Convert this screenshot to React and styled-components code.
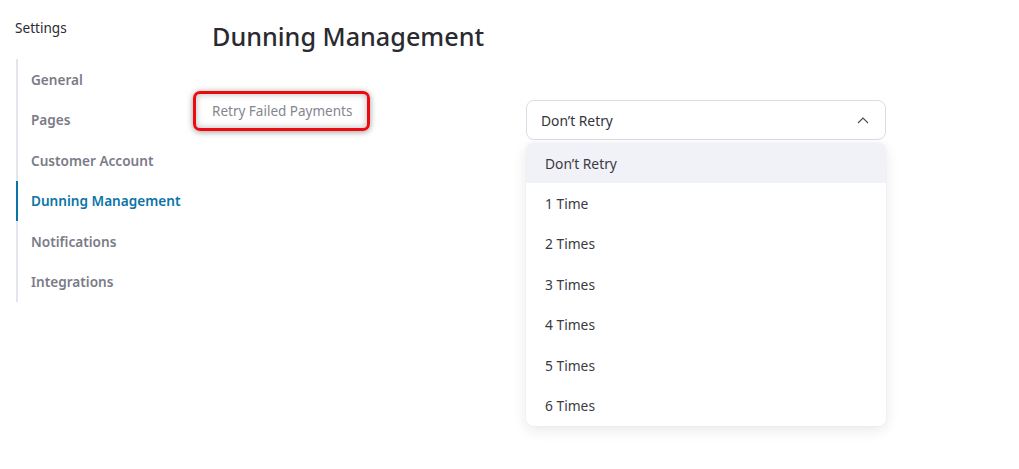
import React from 'react';
import styled, { createGlobalStyle } from "styled-components";

const GlobalStyle = createGlobalStyle`
  body {
    margin: 0;
    background: #ffffff;
    font-family: "Noto Sans", "Open Sans", sans-serif;
  }
`;

const Page = styled.div`
  display: flex;
  width: 1019px;
  height: 469px;
  background: #fff;
`;

const Sidebar = styled.aside`
  width: 196px;
  padding: 18px 0 0 15px;
  box-sizing: border-box;
`;

const SidebarTitle = styled.div`
  font-size: 13.6px;
  color: #2b2b33;
  line-height: 20px;
  margin-bottom: 21px;
`;

const Nav = styled.nav`
  display: flex;
  flex-direction: column;
  border-left: 2px solid #e4e4ee;
  margin-left: 1px;
`;

const NavItem = styled.a`
  display: flex;
  align-items: center;
  height: 40.5px;
  padding-left: 13px;
  margin-left: -2px;
  border-left: 2px solid ${p => (p.$active ? "#0a74a6" : "transparent")};
  color: ${p => (p.$active ? "#0a74a6" : "#7b7b87")};
  font-size: 13.6px;
  font-weight: 600;
  white-space: nowrap;
`;

const Main = styled.main`
  flex: 1;
  padding: 16px 0 0 16px;
`;

const Title = styled.h1`
  margin: 0;
  font-size: 25.2px;
  font-weight: 500;
  color: #2a2a30;
  line-height: 40px;
`;

const Row = styled.div`
  display: flex;
  align-items: flex-start;
  margin-top: 44px;
`;

const LabelCell = styled.div`
  width: 333px;
  margin-left: -19px;
  margin-top: -9px;
`;

const Highlight = styled.div`
  display: inline-flex;
  align-items: center;
  height: 40px;
  padding: 0 15px 0 16px;
  box-sizing: border-box;
  border: 3.5px solid #ec0a10;
  border-radius: 7px;
  box-shadow: 0 1px 6px rgba(0, 0, 0, 0.4), inset 0 0 7px rgba(0, 0, 0, 0.28);
`;

const Label = styled.span`
  font-size: 13.5px;
  color: #85858f;
`;

const SelectWrap = styled.div`
  position: relative;
  width: 360px;
`;

const Trigger = styled.div`
  display: flex;
  align-items: center;
  justify-content: space-between;
  height: 40px;
  box-sizing: border-box;
  padding: 0 16px 0 14px;
  border: 1px solid #dcdce8;
  border-radius: 8px;
  font-size: 13.8px;
  color: #33333b;
`;

const Menu = styled.ul`
  position: absolute;
  top: 43px;
  left: 0;
  right: 0;
  margin: 0;
  padding: 0;
  list-style: none;
  background: #fff;
  border-radius: 8px;
  overflow: hidden;
  box-shadow: 0 4px 14px rgba(30, 30, 60, 0.1), 0 0 2px rgba(30, 30, 60, 0.06);
`;

const Option = styled.li`
  display: flex;
  align-items: center;
  height: 40.4px;
  padding-left: 19px;
  font-size: 13.8px;
  color: #3a3a42;
  background: ${p => (p.$selected ? "#f1f1f8" : "#fff")};
`;

const navItems = ["General", "Pages", "Customer Account", "Dunning Management", "Notifications", "Integrations"];
const options = ["Don’t Retry", "1 Time", "2 Times", "3 Times", "4 Times", "5 Times", "6 Times"];

const ChevronUp = () => (
  <svg width="12" height="7" viewBox="0 0 12 7" fill="none">
    <path d="M1 6L6 1L11 6" stroke="#4a4a52" strokeWidth="1.1" />
  </svg>
);

export default function App() {
  return (
    <Page>
      <GlobalStyle />
      <Sidebar>
        <SidebarTitle>Settings</SidebarTitle>
        <Nav>
          {navItems.map(item => (
            <NavItem key={item} $active={item === "Dunning Management"}>{item}</NavItem>
          ))}
        </Nav>
      </Sidebar>
      <Main>
        <Title>Dunning Management</Title>
        <Row>
          <LabelCell>
            <Highlight>
              <Label>Retry Failed Payments</Label>
            </Highlight>
          </LabelCell>
          <SelectWrap>
            <Trigger>
              <span>Don’t Retry</span>
              <ChevronUp />
            </Trigger>
            <Menu>
              {options.map((o, i) => (
                <Option key={o} $selected={i === 0}>{o}</Option>
              ))}
            </Menu>
          </SelectWrap>
        </Row>
      </Main>
    </Page>
  );
}
